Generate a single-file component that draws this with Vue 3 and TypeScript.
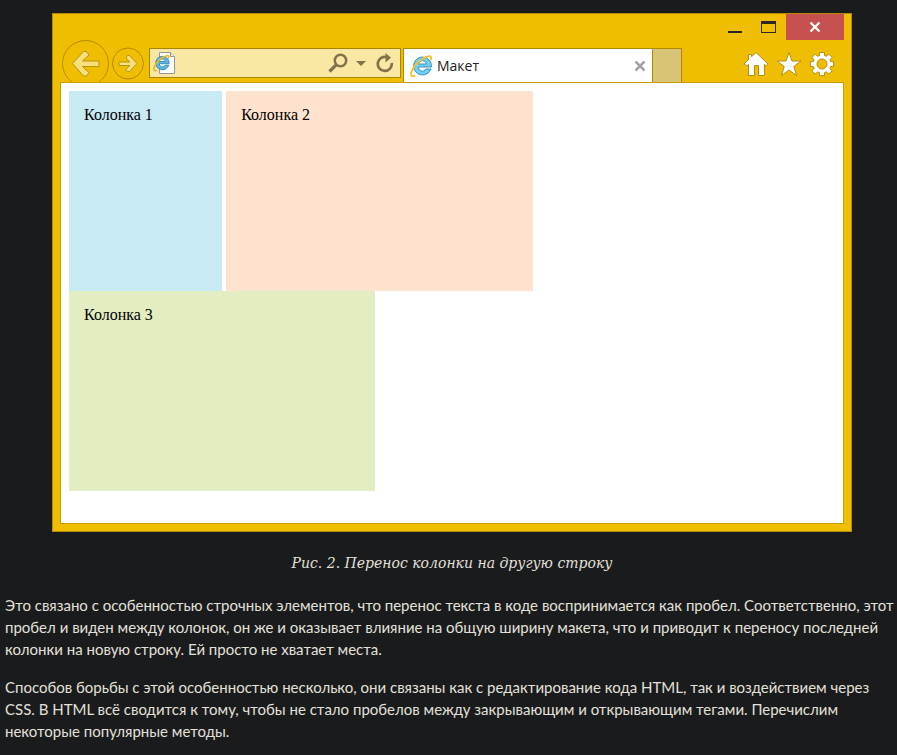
<script setup lang="ts">
interface Column {
  title: string
  kind: string
}

const columns: Column[] = [
  { title: 'Колонка 1', kind: 'narrow' },
  { title: 'Колонка 2', kind: 'wide peach' },
  { title: 'Колонка 3', kind: 'wide green' },
]

const paragraphs: string[] = [
  'Это связано с особенностью строчных элементов, что перенос текста в коде воспринимается как пробел. Соответственно, этот пробел и виден между колонок, он же и оказывает влияние на общую ширину макета, что и приводит к переносу последней колонки на новую строку. Ей просто не хватает места.',
  'Способов борьбы с этой особенностью несколько, они связаны как с редактирование кода HTML, так и воздействием через CSS. В HTML всё сводится к тому, чтобы не стало пробелов между закрывающим и открывающим тегами. Перечислим некоторые популярные методы.',
]
</script>

<template>
  <main class="article">
    <figure class="figure">
      <div class="window">
        <div class="titlebar">
          <button class="caption-button" type="button" aria-label="Свернуть">
            <svg width="16" height="14" viewBox="0 0 16 14"><path d="M1 11h14v2H1z" fill="#2b2620" /></svg>
          </button>
          <button class="caption-button" type="button" aria-label="Развернуть">
            <svg width="16" height="14" viewBox="0 0 16 14">
              <path d="M0 1h15v12H0zM1 4v8h13V4z" fill="#2b2620" fill-rule="evenodd" />
            </svg>
          </button>
          <button class="close-button" type="button" aria-label="Закрыть">
            <svg width="12" height="10" viewBox="0 0 12 10"><path d="M1.500 .5l9 9M10.500 .5l-9 9" stroke="#fff" stroke-width="2.200" /></svg>
          </button>
        </div>

        <div class="toolbar">
          <button class="nav-button back" type="button" aria-label="Назад">
            <svg width="48" height="48" viewBox="0 0 48 48">
              <circle cx="24.500" cy="23.500" r="23" fill="none" stroke="#b38c00" />
              <path d="M11.500 23.500L22.500 11.500h3l2.500 3.500-6.500 6H38v5.500H21.500l6.500 6-2.500 3.500h-3z" fill="#f8df7c" stroke="#b79312" />
            </svg>
          </button>
          <button class="nav-button" type="button" aria-label="Вперёд">
            <svg width="33" height="33" viewBox="0 0 33 33">
              <circle cx="16" cy="16.500" r="15.500" fill="none" stroke="#b38c00" />
              <path d="M25 16.500L17.500 8.500h-2l-1.500 2.500 3.800 4H7v3.500h10.800l-3.800 4L15.500 24.500h2z" fill="#f8df7c" stroke="#b79312" />
            </svg>
          </button>

          <div class="address">
            <svg width="24" height="24" viewBox="0 0 24 24" aria-hidden="true">
              <path d="M7.500 1.500h11l4 4v17h-15z" fill="#fff" stroke="#969696" />
              <path d="M18.500 1.500v4h4" fill="#eee" stroke="#969696" />
              <g transform="translate(1 3) scale(.75)">
                <path d="M12.500 3a9 9 0 1 0 8.500 12h-5c-2.500 4-7.500 2-7.500-2h13A9 9 0 0 0 12.500 3zM8.600 10c.6-4.300 7.200-4.300 7.600 0z" fill="#58b9e9" stroke="#2377ad" fill-rule="evenodd" />
                <path d="M5.500 21.500C-2 25 .5 15.500 8 8.500S23.500 0 20.500 6" fill="none" stroke="#f1b719" stroke-width="2.200" />
              </g>
            </svg>
            <input class="address-input" type="text" aria-label="Адрес">
            <button class="tool search" type="button" aria-label="Поиск">
              <svg width="20" height="20" viewBox="0 0 20 20">
                <circle cx="12.500" cy="7.500" r="5.700" fill="none" stroke="#80724a" stroke-width="2.500" />
                <path d="M8.400 11.600L1.500 18.500" stroke="#80724a" stroke-width="3.200" />
              </svg>
            </button>
            <button class="tool more" type="button" aria-label="Показать список">
              <svg width="10" height="6" viewBox="0 0 10 6"><path d="M0 1h10L5 6z" fill="#80724a" /></svg>
            </button>
            <button class="tool" type="button" aria-label="Обновить">
              <svg width="18" height="20" viewBox="0 0 18 20">
                <path d="M11 4.300A7 7 0 1 0 15.700 10" fill="none" stroke="#80724a" stroke-width="2.700" />
                <path d="M9.500 0L15 4.800 9.500 9.500z" fill="#80724a" />
              </svg>
            </button>
          </div>

          <div class="tab">
            <svg width="24" height="24" viewBox="0 0 24 24" aria-hidden="true">
              <path d="M12.500 3a9 9 0 1 0 8.500 12h-5c-2.500 4-7.500 2-7.500-2h13A9 9 0 0 0 12.500 3zM8.600 10c.6-4.300 7.200-4.300 7.600 0z" fill="#70cff5" stroke="#267fb3" stroke-width=".8" fill-rule="evenodd" />
              <path d="M5.500 21.500C-2 25 .5 15.500 8 8.500S23.500 0 20.500 6" fill="none" stroke="#f5bf2c" stroke-width="1.800" />
            </svg>
            <span class="tab-title">Макет</span>
            <button class="tool" type="button" aria-label="Закрыть вкладку">
              <svg width="12" height="12" viewBox="0 0 12 12"><path d="M1.500 1.500l9 9M10.500 1.500l-9 9" stroke="#a5a5a5" stroke-width="2.500" /></svg>
            </button>
          </div>
          <button class="new-tab" type="button" aria-label="Новая вкладка"></button>

          <div class="commands">
            <button class="tool" type="button" aria-label="Домой">
              <svg width="26" height="26" viewBox="0 0 26 26">
                <path d="M13 1.500l12 11.500-1.500 1.700-2-1.200v11h-6v-10h-4v10h-6v-11l-2 1.200L1 13l4.500-4.500v-5h3v2.200z" fill="#fff" stroke="#b48e10" />
              </svg>
            </button>
            <button class="tool" type="button" aria-label="Избранное">
              <svg width="26" height="26" viewBox="0 0 26 26">
                <path d="M13 1.500l3 8.500h9l-7.200 5.500 2.700 9L13 19l-7.500 5.500 2.700-9L1 10h9z" fill="#fff" stroke="#b48e10" />
              </svg>
            </button>
            <button class="tool" type="button" aria-label="Сервис">
              <svg width="26" height="26" viewBox="0 0 26 26">
                <path d="M10.500 1.500h5v3l2 .8 2.200-2.200 3.400 3.400-2.300 2.200.8 1.900h3v4.900h-3l-.8 2 2.300 2.200-3.400 3.400-2.200-2.200-2 .8v3h-5v-3l-2-.8-2.200 2.200-3.400-3.400 2.300-2.200-.8-2h-3v-4.900h3l.8-1.900-2.300-2.200 3.400-3.400 2.200 2.200 2-.8zM13 8a5 5 0 1 0 0 10 5 5 0 0 0 0-10z" fill="#fff" stroke="#b48e10" fill-rule="evenodd" />
              </svg>
            </button>
          </div>
        </div>

        <div class="viewport">
          <div v-for="column in columns" :key="column.title" class="column" :class="column.kind">{{ column.title }}</div>
        </div>
      </div>
      <figcaption class="caption">Рис. 2. Перенос колонки на другую строку</figcaption>
    </figure>
    <p v-for="(text, index) in paragraphs" :key="index" class="paragraph">{{ text }}</p>
  </main>
</template>

<style>
body {
  margin: 0;
  background: #1a1b1d;
}
</style>

<style scoped>
.article {
  padding: 13px 0 0 5px;
  color: #e3e0da;
  font-family: Lato, sans-serif;
  font-size: 15px;
  line-height: 22px;
}

.figure {
  margin: 0;
  padding-left: 2px;
}

.window {
  box-sizing: border-box;
  max-width: 800px;
  margin: 0 auto;
  padding: 0 7px 7px;
  border: 1px solid #b08a00;
  background: #f0be00;
}

button {
  display: flex;
  align-items: center;
  justify-content: center;
  padding: 0;
  border: 0;
  background: none;
}

svg {
  display: block;
  flex: none;
}

.titlebar {
  display: flex;
  justify-content: flex-end;
  height: 26px;
}

.caption-button {
  width: 34px;
}

.close-button {
  width: 58px;
  background: #c75050;
}

.toolbar {
  display: flex;
  align-items: flex-start;
  height: 42px;
  padding: 0 9px 0 1px;
  overflow: hidden;
}

.nav-button {
  margin: 7px 4px 0 3px;
}

.nav-button.back {
  margin: 0;
}

.address {
  box-sizing: border-box;
  display: flex;
  align-items: center;
  flex: 1 1 252px;
  min-width: 0;
  height: 30px;
  margin-top: 8px;
  padding: 0 6px 0 2px;
  border: 1px solid #a98400;
  background: #f9e7a4;
}

.address-input {
  flex: 1;
  min-width: 0;
  padding: 0 4px;
  border: 0;
  outline: 0;
  background: none;
  font: 14px "Open Sans", sans-serif;
}

.search {
  margin-right: 8px;
}

.more {
  margin-right: 10px;
}

.tab {
  box-sizing: border-box;
  display: flex;
  align-items: center;
  flex: 1 1 250px;
  min-width: 0;
  height: 34px;
  margin: 8px 0 0 2px;
  padding: 0 6px;
  border: 1px solid #b08a00;
  border-bottom: 0;
  background: #fff;
}

.tab-title {
  flex: 1;
  padding-left: 3px;
  color: #222;
  font-family: "Open Sans", sans-serif;
  font-size: 14px;
}

.new-tab {
  width: 29px;
  height: 34px;
  margin-top: 8px;
  border: 1px solid #b08a00;
  border-width: 1px 1px 0 0;
  background: #d8c477;
}

.commands {
  display: flex;
  gap: 7px;
  margin: 11px 0 0 61px;
}

.viewport {
  display: flex;
  flex-wrap: wrap;
  align-content: flex-start;
  gap: 0 4px;
  min-height: 424px;
  padding: 8px;
  border: 1px solid #c79d00;
  background: #fff;
}

.column {
  box-sizing: border-box;
  height: 200px;
  padding: 15px;
  color: #000;
  font-family: "Liberation Serif", serif;
  font-size: 16px;
  line-height: 18px;
}

.narrow {
  width: 20%;
  background: #c8eaf5;
}

.wide {
  width: 40%;
}

.peach {
  background: #ffe3ce;
}

.green {
  background: #e2edc1;
}

.caption {
  margin-top: 20px;
  font-family: "DejaVu Serif", serif;
  font-size: 14px;
  font-style: italic;
  text-align: center;
}

.paragraph {
  margin: 20px 0 16px;
}

.paragraph + .paragraph {
  margin-top: 0;
}
</style>
